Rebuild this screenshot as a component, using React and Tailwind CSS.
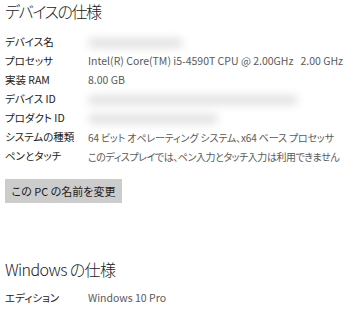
const font = {
  fontFamily: '"Noto Sans CJK JP", "Noto Sans", sans-serif',
};

const rows = [
  { label: 'デバイス名', blur: 'w-[95px]' },
  { label: 'プロセッサ', value: 'Intel(R) Core(TM) i5-4590T CPU @ 2.00GHz   2.00 GHz', cls: 'text-[10.5px]' },
  { label: '実装 RAM', value: '8.00 GB', cls: 'text-[10.5px]' },
  { label: 'デバイス ID', blur: 'w-[210px]' },
  { label: 'プロダクト ID', blur: 'w-[130px]' },
  {
    label: 'システムの種類',
    value: '64 ビット オペレーティング システム、x64 ベース プロセッサ',
    cls: 'text-[10px] tracking-[-0.15px]',
  },
  {
    label: 'ペンとタッチ',
    value: 'このディスプレイでは、ペン入力とタッチ入力は利用できません',
    cls: 'text-[10px] tracking-[-0.45px]',
  },
];

function Row({ label, value, blur, cls }) {
  return (
    <div className="flex h-[19px] items-center text-[10.5px] leading-none">
      <div className="w-[83px] shrink-0 text-[#1a1a1a]">{label}</div>
      {value ? (
        <div className={`whitespace-pre text-[#5a5a5a] ${cls}`}>{value}</div>
      ) : (
        <div className={`h-[10px] ${blur} rounded-full bg-[#e2e2e2] blur-[4px]`} />
      )}
    </div>
  );
}

export default function App() {
  return (
    <div
      className="h-[313px] w-[350px] overflow-hidden bg-white pl-[5px] [font-feature-settings:'palt']"
      style={font}
    >
      <h1 className="text-[16px] font-light leading-[22px] tracking-[-1.4px] text-[#1a1a1a]">デバイスの仕様</h1>
      <div className="mt-[11px]">
        {rows.map((r) => (
          <Row key={r.label} {...r} />
        ))}
      </div>
      <button className="mt-[13px] h-[24px] w-[117px] bg-[#cccccc] text-[11px] text-[#1a1a1a]">
        この PC の名前を変更
      </button>
      <h2 className="mt-[55px] text-[16px] font-light leading-[22px] tracking-[-0.6px] text-[#1a1a1a]">
        Windows の仕様
      </h2>
      <div className="mt-[9px] flex h-[19px] items-center text-[10.5px] leading-none">
        <div className="w-[83px] shrink-0 text-[#1a1a1a]">エディション</div>
        <div className="text-[#5a5a5a]">Windows 10 Pro</div>
      </div>
    </div>
  );
}
